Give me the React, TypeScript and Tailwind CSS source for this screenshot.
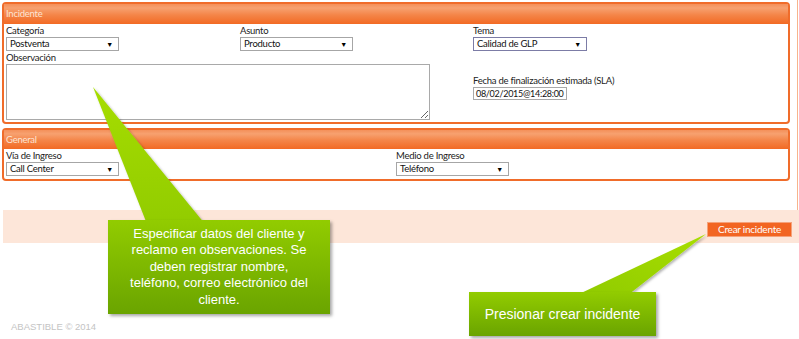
import React from "react";

function Sel({ value, cls }: { value: string; cls: string }) {
  return (
    <div className={cls}>
      <span>{value}</span>
      <span className="text-[7px] leading-none text-black">▼</span>
    </div>
  );
}

const selBase =
  "h-[14px] border bg-white flex items-center justify-between pl-[3px] pr-[5px] text-[9.5px] leading-none text-[#111]";

const lbl = "text-[9.5px] leading-[12px] pt-[1px]";

export default function App() {
  return (
    <div className="relative w-[799px] h-[339px] bg-white overflow-hidden font-[family-name:Lato,'Liberation_Sans',sans-serif] tracking-[-0.25px] text-[#222]">
      <div className="w-[798px] h-[210px] border-r border-[#f8b48c] pt-[2px]">
        {/* Incidente */}
        <div className="ml-[2px] w-[788px] border-2 border-[#f06c2a] rounded-[4px] bg-white">
          <div className="h-[20px] bg-[linear-gradient(to_bottom,#f4905a_0%,#f7a170_20%,#f48548_55%,#f26a24_100%)] text-[#fde4d4] text-[9.5px] leading-[20px] pl-[2px]">
            Incidente
          </div>
          <div className="pl-[2px] pb-[2px]">
            <div className="grid grid-cols-[234px_233px_1fr]">
              <div>
                <div className={lbl}>Categoría</div>
                <Sel value="Postventa" cls={`${selBase} w-[113px] border-[#a6a6a6]`} />
              </div>
              <div>
                <div className={lbl}>Asunto</div>
                <Sel value="Producto" cls={`${selBase} w-[113px] border-[#a6a6a6]`} />
              </div>
              <div>
                <div className={lbl}>Tema</div>
                <Sel value="Calidad de GLP" cls={`${selBase} w-[114px] border-[#7c7ca6]`} />
              </div>
            </div>
            <div className="grid grid-cols-[467px_1fr]">
              <div>
                <div className={lbl}>Observación</div>
                <textarea className="block w-[424px] h-[56px] border border-[#a9a9a9] bg-white outline-none" />
              </div>
              <div className="pt-[24px]">
                <div className="text-[9.5px] leading-[12px]">Fecha de finalización estimada (SLA)</div>
                <div className="w-[94px] h-[13px] border border-[#a9a9a9] text-[9px] tracking-[-0.3px] leading-[11px] pl-[2px] text-[#111] overflow-hidden whitespace-nowrap">
                  08/02/2015@14:28:00
                </div>
              </div>
            </div>
          </div>
        </div>

        {/* General */}
        <div className="ml-[2px] mt-[4px] w-[788px] border-2 border-[#f06c2a] rounded-[4px] bg-white">
          <div className="h-[19px] bg-[linear-gradient(to_bottom,#f4905a_0%,#f7a170_20%,#f48548_55%,#f26a24_100%)] text-[#fde4d4] text-[9.5px] leading-[19px] pl-[2px]">
            General
          </div>
          <div className="pl-[2px] pb-[3px]">
            <div className="grid grid-cols-[390px_1fr]">
              <div>
                <div className={lbl}>Vía de Ingreso</div>
                <Sel value="Call Center" cls={`${selBase} w-[113px] border-[#a6a6a6]`} />
              </div>
              <div>
                <div className={lbl}>Medio de Ingreso</div>
                <Sel value="Teléfono" cls={`${selBase} w-[113px] border-[#a6a6a6]`} />
              </div>
            </div>
          </div>
        </div>
      </div>

      {/* action band */}
      <div className="ml-[3px] h-[33px] bg-[#fde6d9] flex justify-end items-start pt-[12px] pr-[7px]">
        <div className="h-[15px] w-[85px] bg-[#f26522] border border-[#f5a27a] text-white text-[10px] leading-[13px] text-center">
          Crear incidente
        </div>
      </div>

      <div className="mt-[78px] pl-[11px] text-[9.5px] leading-[12px] text-[#c4c4c4] tracking-normal font-[family-name:'Liberation_Sans',sans-serif]">
        ABASTIBLE © 2014
      </div>

      {/* callouts */}
      <svg className="absolute left-0 top-0 pointer-events-none" width="799" height="339">
        <defs>
          <linearGradient id="tri1" x1="0" y1="0" x2="0" y2="1">
            <stop offset="0" stopColor="#a6dd00" />
            <stop offset="1" stopColor="#92cc00" />
          </linearGradient>
          <linearGradient id="tri2" x1="1" y1="0" x2="0" y2="1">
            <stop offset="0" stopColor="#a8de00" />
            <stop offset="1" stopColor="#90cb00" />
          </linearGradient>
          <filter id="sh" x="-20%" y="-20%" width="140%" height="140%">
            <feDropShadow dx="1.5" dy="1.5" stdDeviation="1.2" floodColor="#000" floodOpacity="0.3" />
          </filter>
        </defs>
        <polygon points="93,87 147,224 205,224" fill="url(#tri1)" filter="url(#sh)" />
        <polygon points="706,234 577,295 628,295" fill="url(#tri2)" filter="url(#sh)" />
      </svg>

      <div className="absolute left-[108px] top-[220px] w-[222px] h-[94px] bg-[linear-gradient(to_bottom,#92cc00,#6aa400)] shadow-[2px_2px_3px_rgba(0,0,0,0.35)] flex items-center justify-center text-center text-white text-[13px] leading-[16.6px] tracking-normal font-[family-name:'Liberation_Sans',sans-serif] px-[6px]">
        <div>
          Especificar datos del cliente y
          <br />
          reclamo en observaciones. Se
          <br />
          deben registrar nombre,
          <br />
          teléfono, correo electrónico del
          <br />
          cliente.
        </div>
      </div>

      <div className="absolute left-[469px] top-[292px] w-[187px] h-[44px] bg-[linear-gradient(to_bottom,#92cc00,#6aa400)] shadow-[2px_2px_3px_rgba(0,0,0,0.35)] flex items-center justify-center text-white text-[14px] tracking-normal font-[family-name:'Liberation_Sans',sans-serif]">
        Presionar crear incidente
      </div>
    </div>
  );
}
